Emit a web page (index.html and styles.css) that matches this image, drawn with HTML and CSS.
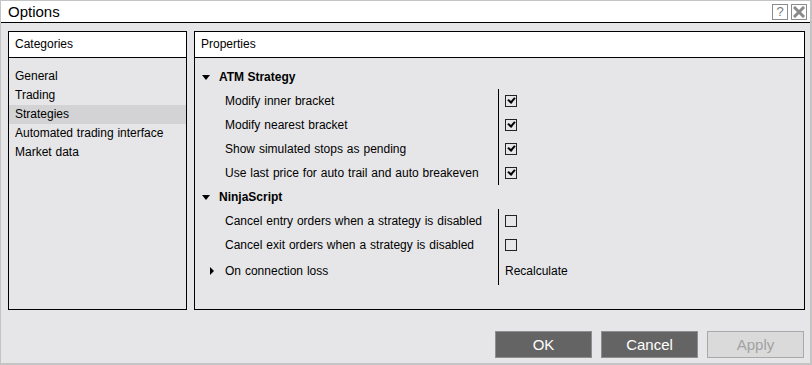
FILE: index.html
```html
<!DOCTYPE html>
<html>
<head>
<meta charset="utf-8">
<link rel="stylesheet" href="styles.css">
</head>
<body>
<div class="window">
  <div class="titlebar">
    <span class="title">Options</span>
    <div class="tb-buttons">
      <span class="tb-btn help">?</span>
      <span class="tb-btn close"><svg width="12" height="12" viewBox="0 0 12 12"><path d="M2 2 L10 10 M10 2 L2 10" stroke="#8a8a8a" stroke-width="3" stroke-linecap="square"/></svg></span>
    </div>
  </div>
  <div class="content">
    <div class="panel categories">
      <div class="panel-header">Categories</div>
      <ul class="cat-list">
        <li>General</li>
        <li>Trading</li>
        <li class="selected">Strategies</li>
        <li>Automated trading interface</li>
        <li>Market data</li>
      </ul>
    </div>
    <div class="panel properties">
      <div class="panel-header">Properties</div>
      <div class="prop-body">
        <div class="group-row"><span class="tri-down"></span><span class="group-name">ATM Strategy</span></div>
        <div class="group">
          <div class="prop-row"><span class="label">Modify inner bracket</span><span class="value"><span class="cb checked"></span></span></div>
          <div class="prop-row"><span class="label">Modify nearest bracket</span><span class="value"><span class="cb checked"></span></span></div>
          <div class="prop-row"><span class="label">Show simulated stops as pending</span><span class="value"><span class="cb checked"></span></span></div>
          <div class="prop-row"><span class="label">Use last price for auto trail and auto breakeven</span><span class="value"><span class="cb checked"></span></span></div>
        </div>
        <div class="group-row"><span class="tri-down"></span><span class="group-name">NinjaScript</span></div>
        <div class="group">
          <div class="prop-row"><span class="label">Cancel entry orders when a strategy is disabled</span><span class="value"><span class="cb"></span></span></div>
          <div class="prop-row"><span class="label">Cancel exit orders when a strategy is disabled</span><span class="value"><span class="cb"></span></span></div>
          <div class="prop-row tall"><span class="label expandable"><span class="tri-right"></span>On connection loss</span><span class="value">Recalculate</span></div>
        </div>
      </div>
    </div>
  </div>
  <div class="footer">
    <button class="btn primary">OK</button>
    <button class="btn primary">Cancel</button>
    <button class="btn disabled">Apply</button>
  </div>
</div>
</body>
</html>
```
FILE: styles.css
```css
* { box-sizing: border-box; }
html, body { margin: 0; padding: 0; }
body {
  width: 812px;
  height: 365px;
  font-family: "Liberation Sans", Arial, sans-serif;
  font-size: 12px;
  color: #000;
  background: #e6e6e8;
  overflow: hidden;
}
.window {
  width: 812px;
  height: 365px;
  border-top: 1px solid #c4c4c4;
  border-left: 1px solid #c4c4c4;
  border-right: 2px solid #c4c4c4;
  border-bottom: 2px solid #c4c4c4;
  background: #e6e6e8;
  display: flex;
  flex-direction: column;
}
.titlebar {
  height: 22px;
  background: #fff;
  border-bottom: 1px solid #000;
  display: flex;
  align-items: center;
  justify-content: space-between;
  padding-left: 7px;
  padding-right: 3px;
  flex: none;
}
.title {
  font-size: 15px;
  line-height: 20px;
}
.tb-buttons {
  display: flex;
  gap: 3px;
  align-items: center;
}
.tb-btn {
  width: 16px;
  height: 16px;
  border: 1px solid #8c8c8c;
  display: flex;
  align-items: center;
  justify-content: center;
  color: #7a7a7a;
  font-size: 13px;
  line-height: 14px;
}
.content {
  display: flex;
  gap: 7px;
  padding: 8px 5px 0 7px;
  flex: none;
}
.panel {
  height: 279px;
  border: 1px solid #000;
  display: flex;
  flex-direction: column;
}
.categories { width: 179px; }
.properties { width: 611px; }
.panel-header {
  height: 26px;
  background: #fff;
  border-bottom: 1px solid #000;
  padding-left: 6px;
  line-height: 25px;
  flex: none;
}
.cat-list {
  list-style: none;
  margin: 0;
  padding: 9px 0 0 0;
}
.cat-list li {
  height: 19px;
  line-height: 19px;
  padding-left: 6px;
  word-spacing: 0.5px;
}
.cat-list li.selected { background: #d3d3d5; }
.prop-body {
  padding-top: 7px;
}
.group-row {
  height: 24px;
  display: flex;
  align-items: center;
  padding-left: 7px;
  font-weight: bold;
}
.tri-down {
  width: 0; height: 0;
  border-left: 4px solid transparent;
  border-right: 4px solid transparent;
  border-top: 5px solid #000;
  margin-right: 9px;
}
.tri-right {
  display: inline-block;
  width: 0; height: 0;
  border-top: 4px solid transparent;
  border-bottom: 4px solid transparent;
  border-left: 4px solid #000;
  margin-right: 11px;
}
.prop-row {
  height: 24px;
  display: flex;
}
.prop-row.tall { height: 28px; }
.label {
  width: 303px;
  padding-left: 30px;
  display: flex;
  align-items: center;
  flex: none;
  word-spacing: 0.6px;
}
.label.expandable { padding-left: 15px; }
.value {
  border-left: 1px solid #000;
  padding-left: 6px;
  display: flex;
  align-items: center;
}
.cb {
  width: 12px;
  height: 12px;
  border: 1px solid #222;
  position: relative;
}
.cb.checked::after {
  content: "";
  position: absolute;
  left: 2px;
  top: 1px;
  width: 5px;
  height: 3px;
  border-left: 2px solid #000;
  border-bottom: 2px solid #000;
  transform: rotate(-50deg);
  transform-origin: center;
}
.footer {
  display: flex;
  justify-content: flex-end;
  gap: 9px;
  padding: 21px 6px 0 0;
}
.btn {
  width: 97px;
  height: 27px;
  font-family: "Liberation Sans", Arial, sans-serif;
  font-size: 15px;
  padding: 0;
  margin: 0;
}
.btn.primary {
  background: #646464;
  border: 1px solid #8e8e8e;
  color: #fff;
}
.btn.disabled {
  background: #dadada;
  border: 1px solid #a9a9a9;
  color: #a2a2a2;
}
```
